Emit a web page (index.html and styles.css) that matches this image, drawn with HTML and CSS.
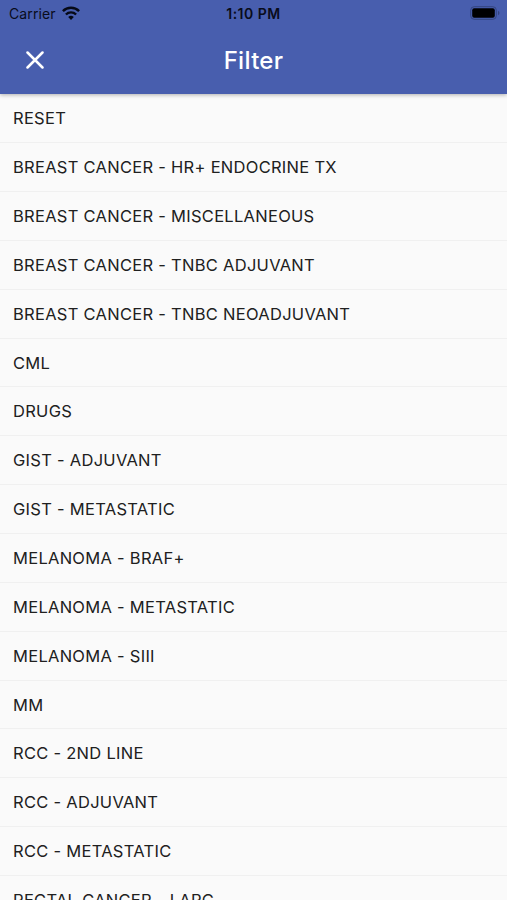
FILE: index.html
```html
<!DOCTYPE html>
<html lang="en">
<head>
<meta charset="utf-8">
<title>Filter</title>
<link rel="stylesheet" href="styles.css">
</head>
<body>
<header class="header">
  <div class="status">
    <div class="carrier"><span class="carrier-name">Carrier</span>
      <svg class="wifi" viewBox="0 0 18 14" width="18" height="14"><path d="M.9 5.200a11.400 11.400 0 0 1 16.200 0M3.900 8.500a7.200 7.200 0 0 1 10.200 0" fill="none" stroke="#060916" stroke-width="2.400"/><path d="M9 14 6.200 11a4 4 0 0 1 5.600 0z" fill="#060916"/></svg>
    </div>
    <span class="time">1:10 PM</span>
    <svg class="battery" viewBox="0 0 30 14" width="30" height="14"><rect x=".7" y=".7" width="25.600" height="12.600" rx="3.500" fill="none" stroke="#34457f"/><rect x="2.200" y="2.200" width="22.600" height="9.600" rx="2" fill="#000"/><path d="M28 4.800q1.500.7 1.500 2.200T28 9.200z" fill="#34457f"/></svg>
  </div>
  <div class="bar">
    <svg class="close" viewBox="0 0 18 18" width="18" height="18"><path d="M1.500 1.500 16.500 16.500M16.500 1.500 1.500 16.500" stroke="#fff" stroke-width="2.500" stroke-linecap="round"/></svg>
    <h1 class="title">Filter</h1>
  </div>
</header>
<ul class="list">
  <li><span>RESET</span></li>
  <li><span>BREAST CANCER - HR+ ENDOCRINE TX</span></li>
  <li><span>BREAST CANCER - MISCELLANEOUS</span></li>
  <li><span>BREAST CANCER - TNBC ADJUVANT</span></li>
  <li><span>BREAST CANCER - TNBC NEOADJUVANT</span></li>
  <li><span>CML</span></li>
  <li><span>DRUGS</span></li>
  <li><span>GIST - ADJUVANT</span></li>
  <li><span>GIST - METASTATIC</span></li>
  <li><span>MELANOMA - BRAF+</span></li>
  <li><span>MELANOMA - METASTATIC</span></li>
  <li><span>MELANOMA - SIII</span></li>
  <li><span>MM</span></li>
  <li><span>RCC - 2ND LINE</span></li>
  <li><span>RCC - ADJUVANT</span></li>
  <li><span>RCC - METASTATIC</span></li>
  <li><span>RECTAL CANCER - LARC</span></li>
</ul>
</body>
</html>
```
FILE: styles.css
```css
* { box-sizing: border-box; }
body { margin: 0; height: 900px; overflow: hidden; background: #fafafa; color: #202020; font-family: Inter, sans-serif; }
.header { position: relative; height: 94px; background: #485eae; box-shadow: 0 1px 4px rgba(0,0,0,.3); }
.status { display: grid; grid-template-columns: 1fr auto 1fr; align-items: center; height: 27px; padding: 0 7px; color: #090c1b; }
.carrier { display: flex; align-items: center; gap: 6px; padding-left: 2px; font-size: 14px; letter-spacing: .1px; }
.wifi { margin-top: -2px; }
.time { font-size: 14px; font-weight: 600; letter-spacing: .5px; }
.battery { justify-self: end; margin-top: -1px; }
.bar { display: grid; grid-template-columns: 1fr auto 1fr; align-items: center; height: 66px; padding: 0 26px; }
.title { margin: 0; color: #fff; font-size: 24px; font-weight: 500; letter-spacing: .3px; }
.list { margin: 0; padding: .3px 0 0; list-style: none; }
.list li { display: flex; align-items: center; height: 48.87px; padding-left: 13px; border-bottom: 1px solid #f0f0f0; font-size: 16.5px; letter-spacing: .28px; white-space: nowrap; }
```
